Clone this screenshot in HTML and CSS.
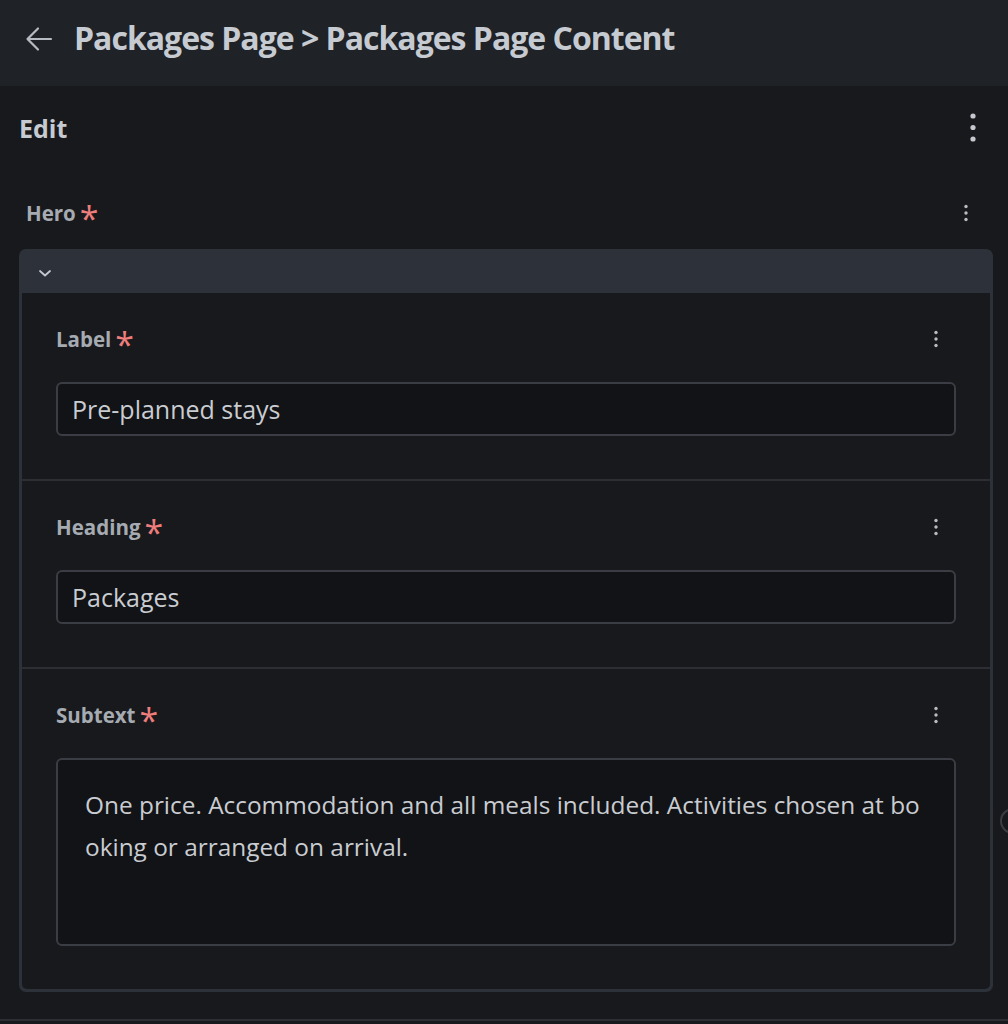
FILE: index.html
```html
<!DOCTYPE html>
<html lang="en">

<head>
    <meta charset="UTF-8">
    <meta name="viewport" content="width=device-width, initial-scale=1.0">
    <title>Packages Page Content</title>
    <link rel="stylesheet" href="styles.css">
</head>

<body>
    <header class="topbar">
        <svg class="back" width="28" height="28" viewBox="0 0 28 28">
            <path d="M26 14H3M13 3.5L2.5 14L13 24.5" fill="none" stroke="#b7bbc2" stroke-width="2.2" stroke-linecap="round" stroke-linejoin="round" />
        </svg>
        <h1>Packages Page &gt; Packages Page Content</h1>
    </header>

    <main class="editor">
        <div class="edit-row">
            <h2>Edit</h2>
            <svg class="kebab-lg" width="8" height="32" viewBox="0 0 8 32">
                <circle cx="4" cy="4" r="2.6" fill="#c5c8ce" />
                <circle cx="4" cy="15.5" r="2.6" fill="#c5c8ce" />
                <circle cx="4" cy="27" r="2.6" fill="#c5c8ce" />
            </svg>
        </div>

        <div class="field-row hero">
            <span class="field-label">Hero<span class="req">*</span></span>
            <svg class="kebab" width="6" height="18" viewBox="0 0 6 18">
                <circle cx="3" cy="2.5" r="1.7" fill="#b9bcc3" />
                <circle cx="3" cy="9" r="1.7" fill="#b9bcc3" />
                <circle cx="3" cy="15.5" r="1.7" fill="#b9bcc3" />
            </svg>
        </div>

        <div class="group">
            <div class="group-bar">
                <svg width="14" height="10" viewBox="0 0 14 10">
                    <path d="M2 3l5 4.5L12 3" fill="none" stroke="#c5c8ce" stroke-width="1.8" stroke-linecap="round" stroke-linejoin="round" />
                </svg>
            </div>
            <div class="group-body">
                <section class="field">
                    <div class="field-row">
                        <span class="field-label">Label<span class="req">*</span></span>
                        <svg class="kebab" width="6" height="18" viewBox="0 0 6 18">
                            <circle cx="3" cy="2.5" r="1.7" fill="#b9bcc3" />
                            <circle cx="3" cy="9" r="1.7" fill="#b9bcc3" />
                            <circle cx="3" cy="15.5" r="1.7" fill="#b9bcc3" />
                        </svg>
                    </div>
                    <input class="text-input" type="text" value="Pre-planned stays" />
                </section>

                <section class="field">
                    <div class="field-row">
                        <span class="field-label">Heading<span class="req">*</span></span>
                        <svg class="kebab" width="6" height="18" viewBox="0 0 6 18">
                            <circle cx="3" cy="2.5" r="1.7" fill="#b9bcc3" />
                            <circle cx="3" cy="9" r="1.7" fill="#b9bcc3" />
                            <circle cx="3" cy="15.5" r="1.7" fill="#b9bcc3" />
                        </svg>
                    </div>
                    <input class="text-input" type="text" value="Packages" />
                </section>

                <section class="field">
                    <div class="field-row">
                        <span class="field-label">Subtext<span class="req">*</span></span>
                        <svg class="kebab" width="6" height="18" viewBox="0 0 6 18">
                            <circle cx="3" cy="2.5" r="1.7" fill="#b9bcc3" />
                            <circle cx="3" cy="9" r="1.7" fill="#b9bcc3" />
                            <circle cx="3" cy="15.5" r="1.7" fill="#b9bcc3" />
                        </svg>
                    </div>
                    <div class="text-area">One price. Accommodation and all meals included. Activities chosen at bo<br>oking or arranged on arrival.</div>
                </section>
            </div>
        </div>

        <div class="bottom-line"></div>
        <div class="side-handle"></div>
    </main>
</body>

</html>
```

FILE: styles.css
```css
body {
    margin: 0;
    background-color: #18191c;
    font-family: "Open Sans", "Noto Sans", sans-serif;
    color: #a9adb4;
}

.topbar {
    height: 86px;
    background-color: #1f2226;
    display: flex;
    align-items: center;
    padding-left: 25px;
    box-sizing: border-box;
}

.topbar .back {
    margin-right: 21px;
    margin-top: -8px;
}

.topbar h1 {
    margin: 0;
    margin-top: -11px;
    font-size: 32px;
    font-weight: 700;
    letter-spacing: -1px;
    color: #c6cad1;
}

.editor {
    position: relative;
    overflow: hidden;
}

.edit-row {
    height: 84px;
    display: flex;
    align-items: center;
    justify-content: space-between;
    padding: 0 31px 0 19px;
}

.edit-row h2 {
    margin: 0;
    font-size: 25px;
    font-weight: 700;
    color: #c6cad1;
}

.field-row {
    display: flex;
    align-items: center;
    justify-content: space-between;
    height: 30px;
}

.field-row.hero {
    margin: 28px 39px 21px 26px;
}

.field-label {
    font-size: 20.5px;
    font-weight: 700;
    color: #a6abb2;
    display: flex;
    align-items: center;
}

.req {
    color: #ee7e7c;
    font-size: 34px;
    font-weight: 400;
    line-height: 1;
    margin-left: 4px;
    position: relative;
    top: 5px;
}

.group {
    margin: 0 15px 0 19px;
    border: 3px solid #2d3139;
    border-radius: 7px;
    background-color: #2d3139;
}

.group-bar {
    height: 41px;
    display: flex;
    align-items: center;
    padding-left: 16px;
}

.group-body {
    background-color: #18191c;
    border-radius: 0 0 5px 5px;
}

.field {
    padding: 31px 34px 43px 34px;
    border-bottom: 2px solid #2c2e33;
}

.field:last-child {
    border-bottom: none;
}

.field .field-row {
    padding-right: 17px;
}

.text-input {
    display: block;
    width: 100%;
    box-sizing: border-box;
    margin-top: 28px;
    height: 54px;
    padding: 0 14px;
    background-color: #121316;
    border: 2px solid #3a3d43;
    border-radius: 6px;
    font-family: "Open Sans", "Noto Sans", sans-serif;
    font-size: 25px;
    color: #c9ccd1;
    outline: none;
}

.text-area {
    margin-top: 28px;
    height: 188px;
    box-sizing: border-box;
    padding: 24px 27px;
    background-color: #121316;
    border: 2px solid #3a3d43;
    border-radius: 6px;
    font-size: 24.4px;
    line-height: 42px;
    color: #c9ccd1;
}

.bottom-line {
    margin-top: 27px;
    height: 2px;
    background-color: #2c2e33;
}

.side-handle {
    position: absolute;
    right: -18px;
    top: 722px;
    width: 22px;
    height: 22px;
    border: 2px solid #3a3d43;
    border-radius: 50%;
}
```
